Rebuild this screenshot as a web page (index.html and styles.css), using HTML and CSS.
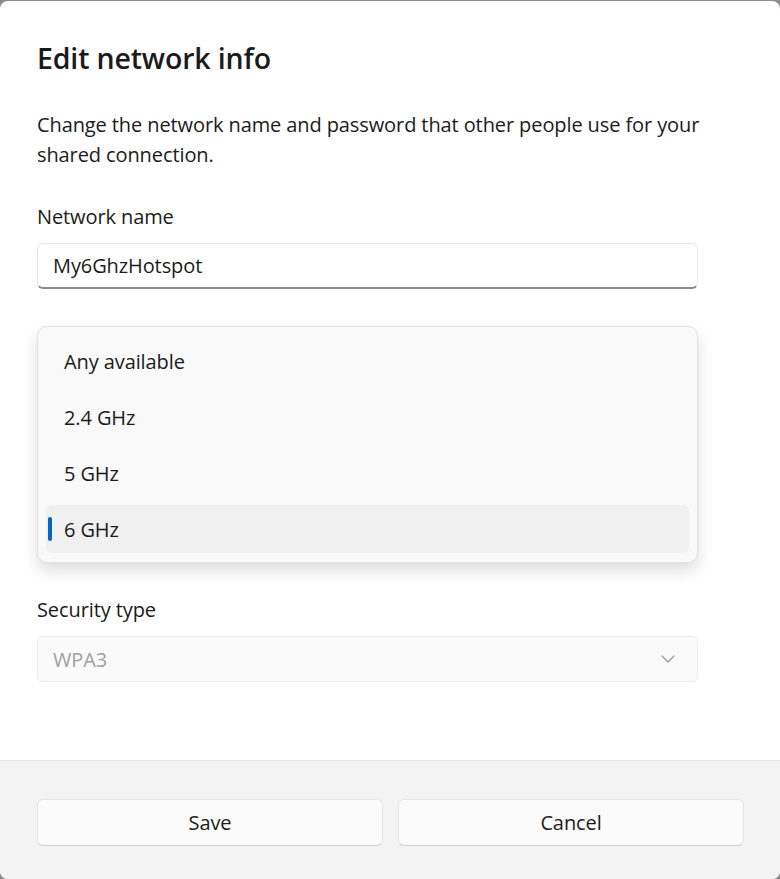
FILE: index.html
```html
<!DOCTYPE html>
<html lang="en">
<head>
<meta charset="utf-8">
<title>Edit network info</title>
<link rel="stylesheet" href="styles.css">
</head>
<body>
<div class="dialog">
  <div class="content">
    <h1 class="title">Edit network info</h1>
    <p class="desc">Change the network name and password that other people use for your shared connection.</p>

    <div class="field">
      <label class="label">Network name</label>
      <div class="textbox"><span>My6GhzHotspot</span></div>
    </div>

    <div class="field">
      <div class="label-space"></div>
      <div class="textbox"></div>
    </div>

    <div class="field">
      <div class="label-space"></div>
      <div class="combo-wrap">
        <div class="combo"></div>
        <div class="popup">
          <div class="item">Any available</div>
          <div class="item">2.4 GHz</div>
          <div class="item">5 GHz</div>
          <div class="item selected"><span class="indicator"></span>6 GHz</div>
        </div>
      </div>
    </div>

    <div class="field">
      <label class="label">Security type</label>
      <div class="combo disabled">
        <span>WPA3</span>
        <svg class="chev" width="14" height="8" viewBox="0 0 14 8"><path d="M1 1 L7 7 L13 1" fill="none" stroke="#9a9a9a" stroke-width="1.4" stroke-linecap="round" stroke-linejoin="round"/></svg>
      </div>
    </div>
  </div>
  <div class="footer">
    <button class="btn">Save</button>
    <button class="btn">Cancel</button>
  </div>
</div>
</body>
</html>
```

FILE: styles.css
```css
* { box-sizing: border-box; }
html, body { margin: 0; padding: 0; height: 100%; }
body {
  background: #8c8c8c;
  padding-top: 1px;
  font-family: "Open Sans", "Noto Sans", sans-serif;
  color: #1b1b1b;
  overflow: hidden;
}
.dialog {
  height: 878px;
  background: #ffffff;
  border-radius: 8px;
  overflow: hidden;
  display: flex;
  flex-direction: column;
}
.content {
  flex: 1;
  padding: 37px 82px 0 37px;
}
.title {
  margin: 0;
  font-size: 28.5px;
  line-height: 40px;
  font-weight: 600;
  letter-spacing: -0.15px;
}
.desc {
  margin: 32px -10px 0 0;
  font-size: 20px;
  line-height: 30px;
  letter-spacing: -0.1px;
}
.field { margin-top: 44px; }
.field:first-of-type { margin-top: 32px; }
.label {
  display: block;
  font-size: 20px;
  line-height: 30px;
  letter-spacing: -0.1px;
}
.label-space { height: 30px; }
.textbox {
  margin-top: 11px;
  height: 46px;
  background: #ffffff;
  border: 1px solid #e6e6e6;
  border-bottom: 2px solid #8a8a8a;
  border-radius: 6px;
  padding: 0 15px;
  display: flex;
  align-items: center;
  font-size: 20px;
  letter-spacing: -0.1px;
}
.combo-wrap { position: relative; margin-top: 11px; }
.combo {
  height: 46px;
  background: #fbfbfb;
  border: 1px solid #dcdcdc;
  border-bottom-color: #c8c8c8;
  border-radius: 6px;
  padding: 0 22px 0 15px;
  display: flex;
  align-items: center;
  justify-content: space-between;
  font-size: 20px;
  letter-spacing: -0.1px;
}
.field > .combo { margin-top: 11px; }
.combo.disabled {
  background: #fafafa;
  border-color: #ececec;
  color: #a0a0a0;
}
.chev { display: block; }
.popup {
  position: absolute;
  top: -179px;
  left: 0;
  right: 0;
  height: 237px;
  background: #f9f9f9;
  border: 1px solid #e4e4e4;
  border-radius: 10px;
  box-shadow: 0 8px 16px rgba(0,0,0,0.13), 0 0 2px rgba(0,0,0,0.06);
  padding: 10px 8px 9px 8px;
  display: flex;
  flex-direction: column;
  gap: 8px;
}
.item {
  position: relative;
  height: 48px;
  flex: none;
  display: flex;
  align-items: center;
  padding-left: 18px;
  border-radius: 6px;
  font-size: 20px;
  letter-spacing: -0.1px;
  color: #1b1b1b;
}
.item.selected { background: #f0f0f0; }
.indicator {
  position: absolute;
  left: 2px;
  top: 12px;
  width: 4px;
  height: 24px;
  border-radius: 2px;
  background: #0067c0;
}
.footer {
  flex: none;
  height: 119px;
  background: #f3f3f3;
  border-top: 1px solid #e5e5e5;
  padding: 38px 36px 0 37px;
  display: flex;
  gap: 15px;
  align-items: flex-start;
}
.btn {
  flex: 1;
  height: 47px;
  background: #fbfbfb;
  border: 1px solid #e5e5e5;
  border-bottom-color: #cfcfcf;
  border-radius: 6px;
  font-family: inherit;
  font-size: 20px;
  letter-spacing: -0.1px;
  color: #1b1b1b;
  padding: 0;
}
```
